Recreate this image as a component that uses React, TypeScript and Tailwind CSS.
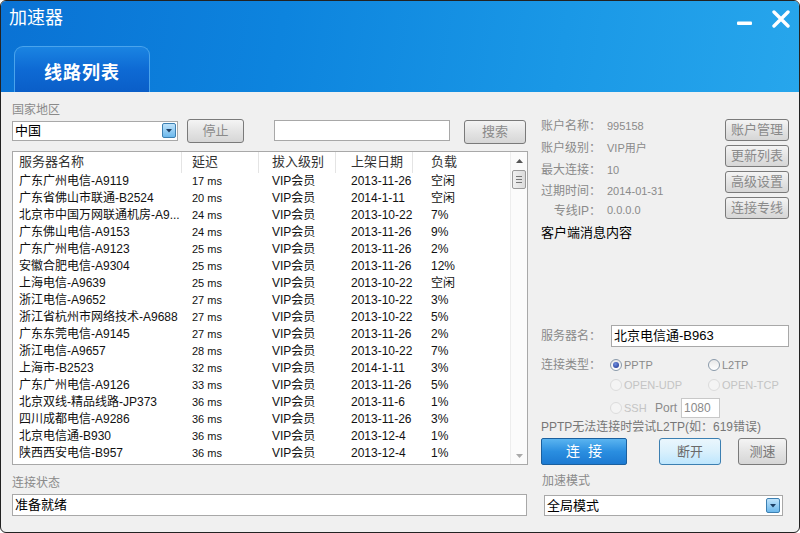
import React from "react";

const rows: [string, string, string, string, string][] = [
  ["广东广州电信-A9119", "17 ms", "VIP会员", "2013-11-26", "空闲"],
  ["广东省佛山市联通-B2524", "20 ms", "VIP会员", "2014-1-11", "空闲"],
  ["北京市中国万网联通机房-A9...", "24 ms", "VIP会员", "2013-10-22", "7%"],
  ["广东佛山电信-A9153", "24 ms", "VIP会员", "2013-11-26", "9%"],
  ["广东广州电信-A9123", "25 ms", "VIP会员", "2013-11-26", "2%"],
  ["安徽合肥电信-A9304", "25 ms", "VIP会员", "2013-11-26", "12%"],
  ["上海电信-A9639", "25 ms", "VIP会员", "2013-10-22", "空闲"],
  ["浙江电信-A9652", "27 ms", "VIP会员", "2013-10-22", "3%"],
  ["浙江省杭州市网络技术-A9688", "27 ms", "VIP会员", "2013-10-22", "5%"],
  ["广东东莞电信-A9145", "27 ms", "VIP会员", "2013-11-26", "2%"],
  ["浙江电信-A9657", "28 ms", "VIP会员", "2013-10-22", "7%"],
  ["上海市-B2523", "32 ms", "VIP会员", "2014-1-11", "3%"],
  ["广东广州电信-A9126", "33 ms", "VIP会员", "2013-11-26", "5%"],
  ["北京双线-精品线路-JP373", "36 ms", "VIP会员", "2013-11-6", "1%"],
  ["四川成都电信-A9286", "36 ms", "VIP会员", "2013-11-26", "3%"],
  ["北京电信通-B930", "36 ms", "VIP会员", "2013-12-4", "1%"],
  ["陕西西安电信-B957", "36 ms", "VIP会员", "2013-12-4", "1%"],
];

const info: [string, string, string][] = [
  ["账户名称：", "995158", "h-[22px]"],
  ["账户级别：", "VIP用户", "h-[22px]"],
  ["最大连接：", "10", "h-[22px]"],
  ["过期时间：", "2014-01-31", "h-[20px]"],
  ["专线IP：", "0.0.0.0", "h-[19px]"],
];

function DropBtn() {
  return (
    <div className="w-[14px] h-[15px] rounded-[2px] border border-[#3c7fb1] bg-[linear-gradient(#bfe3fb,#6cb8ec)] flex items-center justify-center">
      <svg width="6" height="4" viewBox="0 0 6 4">
        <path d="M0 0h6L3 3.5z" fill="#1c3f66" />
      </svg>
    </div>
  );
}

function GrayBtn({ children, cls }: { children: React.ReactNode; cls: string }) {
  return (
    <div
      className={
        "flex items-center justify-center rounded-[3px] border border-[#7a7a7a] bg-[linear-gradient(#f4f4f4,#e4e4e4_50%,#d6d6d6)] text-[13px] text-[#8a8a8a] " +
        cls
      }
    >
      {children}
    </div>
  );
}

function Radio({ checked, disabled, label }: { checked?: boolean; disabled?: boolean; label: string }) {
  return (
    <div className={"flex items-center gap-[2px] " + (disabled ? "text-[#c4c4c4]" : "text-[#8a8a8a]")}>
      <div
        className={
          "w-[12px] h-[12px] rounded-full border flex items-center justify-center " +
          (disabled ? "border-[#dcdcdc] bg-[#f4f4f4]" : "border-[#8a9aaa] bg-[linear-gradient(#e8e8e8,#ffffff)]")
        }
      >
        {checked && <div className="w-[6px] h-[6px] rounded-full bg-[radial-gradient(circle_at_40%_35%,#6f8fe0,#1a2f8a)]" />}
      </div>
      <span>{label}</span>
    </div>
  );
}

export default function App() {
  return (
    <div
      className="w-[800px] h-[533px] bg-white overflow-hidden"
      style={{ fontFamily: '"Liberation Sans", "Noto Sans CJK SC", sans-serif' }}
    >
      <div className="w-[800px] h-[533px] rounded-[6px] border border-[#222] overflow-hidden flex flex-col bg-[#f0f0f0]">
        {/* title area */}
        <div className="relative h-[91px] shrink-0 bg-[linear-gradient(100deg,#0a72d4_0%,#0d84de_35%,#1a98e6_70%,#27a6ec_100%)]">
          <div className="absolute left-[8px] top-[5px] text-[18px] leading-[24px] text-white">加速器</div>
          <svg className="absolute left-[736px] top-[20px]" width="15" height="5" viewBox="0 0 15 5">
            <rect x="0" y="0.5" width="15" height="3.5" rx="1" fill="#fff" />
          </svg>
          <svg className="absolute left-[771px] top-[9px]" width="18" height="18" viewBox="0 0 18 18">
            <path d="M2 2L16 16M16 2L2 16" stroke="#fff" strokeWidth="3.4" strokeLinecap="round" />
          </svg>
          <div className="absolute left-[13px] top-[45px] w-[136px] h-[46px] rounded-t-[9px] border border-b-0 border-[#4aa4ec] bg-[linear-gradient(#1a84e2,#0e6ad4_50%,#0a5ec8)] flex items-center justify-center">
            <span className="text-[18px] font-bold text-white pt-[8px] tracking-[1px]">线路列表</span>
          </div>
        </div>

        {/* body */}
        <div className="flex flex-1">
          {/* left column */}
          <div className="ml-[11px] w-[516px] flex flex-col">
            <div className="pt-[10px] h-[26px] text-[12px] leading-[16px] text-[#8a8a8a]">国家地区</div>
            <div className="h-[25px] flex items-center">
              <div className="w-[166px] h-[20px] border border-[#a8a8a8] bg-white flex items-center justify-between pl-[2px] pr-[1px]">
                <span className="text-[13px] text-black">中国</span>
                <DropBtn />
              </div>
              <GrayBtn cls="ml-[9px] w-[57px] h-[24px]">停止</GrayBtn>
              <div className="ml-[30px] w-[176px] h-[21px] border border-[#a8a8a8] bg-white" />
              <GrayBtn cls="ml-[14px] w-[62px] h-[24px] mt-[2px]">搜索</GrayBtn>
            </div>
            {/* list */}
            <div className="mt-[8px] h-[314px] border border-[#a8a8a8] bg-white flex">
              <div className="flex-1 flex flex-col">
                <div className="h-[21px] flex text-[13px] text-[#333] leading-[19px]">
                  <div className="w-[169px] pl-[6px] border-r border-[#e4e4e4]">服务器名称</div>
                  <div className="w-[77px] pl-[10px] border-r border-[#e4e4e4]">延迟</div>
                  <div className="w-[77px] pl-[13px] border-r border-[#e4e4e4]">拔入级别</div>
                  <div className="w-[77px] pl-[15px] border-r border-[#e4e4e4]">上架日期</div>
                  <div className="flex-1 pl-[18px]">负载</div>
                </div>
                {rows.map((r, i) => (
                  <div key={i} className="h-[17px] flex items-center text-[12px] text-[#111] leading-[17px] whitespace-nowrap">
                    <div className="w-[179px] pl-[6px] overflow-hidden">{r[0]}</div>
                    <div className="w-[80px] text-[11px]">{r[1]}</div>
                    <div className="w-[79px] text-[12px]">{r[2]}</div>
                    <div className="w-[80px]">{r[3]}</div>
                    <div className="flex-1">{r[4]}</div>
                  </div>
                ))}
              </div>
              <div className="w-[17px] border-l border-[#ededed] bg-[#fbfbfb] flex flex-col items-center">
                <div className="h-[18px] flex items-center justify-center">
                  <svg width="7" height="4" viewBox="0 0 7 4"><path d="M0 4L3.5 0L7 4z" fill="#555" /></svg>
                </div>
                <div className="w-[14px] h-[19px] rounded-[2px] border border-[#9a9a9a] bg-[linear-gradient(90deg,#f0f0f0,#dcdcdc)] flex flex-col items-center justify-center gap-[2px]">
                  <div className="w-[6px] h-px bg-[#777]" />
                  <div className="w-[6px] h-px bg-[#777]" />
                  <div className="w-[6px] h-px bg-[#777]" />
                </div>
                <div className="flex-1" />
                <div className="h-[17px] flex items-center justify-center">
                  <svg width="7" height="4" viewBox="0 0 7 4"><path d="M0 0L3.5 4L7 0z" fill="#aaa" /></svg>
                </div>
              </div>
            </div>
            <div className="mt-[10px] h-[16px] text-[12px] leading-[16px] text-[#8a8a8a]">连接状态</div>
            <div className="mt-[3px] w-[515px] h-[22px] border border-[#a8a8a8] bg-white flex items-center pl-[2px] text-[13px] text-black">
              准备就绪
            </div>
          </div>

          {/* right column */}
          <div className="ml-[13px] w-[248px] flex flex-col text-[12px]">
            <div className="mt-[23px] h-[106px] flex">
              <div className="flex-1 flex flex-col text-[#8a8a8a]">
                {info.map(([a, b, h]) => (
                  <div key={a} className={h + " flex items-center"}>
                    <div className="w-[60px] text-right text-[12px]">{a}</div>
                    <div className="ml-[6px] text-[11px]">{b}</div>
                  </div>
                ))}
              </div>
              <div className="w-[64px] flex flex-col gap-[4px] pt-[4px]">
                {["账户管理", "更新列表", "高级设置", "连接专线"].map((t) => (
                  <GrayBtn key={t} cls="w-[64px] h-[22px] text-[#6a6a6a]">{t}</GrayBtn>
                ))}
              </div>
            </div>
            <div className="mt-[4px] h-[16px] leading-[16px] text-[13px] text-black">客户端消息内容</div>
            <div className="mt-[84px] h-[22px] flex items-center">
              <div className="w-[70px] text-[#8a8a8a] text-[12px]">服务器名：</div>
              <div className="w-[178px] h-[22px] border border-[#a8a8a8] bg-white flex items-center pl-[2px] text-[13px] text-black">
                北京电信通-B963
              </div>
            </div>
            <div className="mt-[8px] h-[20px] flex items-center text-[11px]">
              <div className="w-[69px] text-[12px] text-[#8a8a8a]">连接类型：</div>
              <div className="w-[98px]"><Radio checked label="PPTP" /></div>
              <Radio label="L2TP" />
            </div>
            <div className="h-[20px] flex items-center text-[11px]">
              <div className="w-[69px]" />
              <div className="w-[98px]"><Radio disabled label="OPEN-UDP" /></div>
              <Radio disabled label="OPEN-TCP" />
            </div>
            <div className="mt-[3px] h-[20px] flex items-center text-[11px]">
              <div className="w-[69px]" />
              <div className="w-[45px]"><Radio disabled label="SSH" /></div>
              <span className="text-[#8a8a8a] text-[12px]">Port</span>
              <div className="ml-[4px] w-[39px] h-[20px] border border-[#c8c8c8] bg-white flex items-center pl-[2px] text-[#8a8a8a] text-[12px]">1080</div>
            </div>
            <div className="mt-[1px] h-[16px] leading-[16px] text-[#777] text-[12px] whitespace-nowrap">PPTP无法连接时尝试L2TP(如：619错误)</div>
            <div className="mt-[3px] h-[27px] flex items-center">
              <div className="w-[86px] h-[27px] rounded-[2px] border border-[#1a5f9e] bg-[linear-gradient(#5ab4f0,#2a8ee0_50%,#1c7ad2)] text-white text-[14px] flex items-center justify-center tracking-[8px] pl-[8px]">
                连接
              </div>
              <div className="ml-[32px] w-[62px] h-[27px] rounded-[3px] border border-[#3c7fb1] bg-[linear-gradient(#eaf6fd,#d9f0fc_50%,#bee6fd)] text-[#6a6a6a] text-[13px] flex items-center justify-center">
                断开
              </div>
              <GrayBtn cls="ml-[17px] w-[49px] h-[27px] text-[#777]">测速</GrayBtn>
            </div>
            <div className="mt-[8px] h-[16px] leading-[16px] text-[#8a8a8a] text-[12px] pl-[1px]">加速模式</div>
            <div className="mt-[6px] ml-[3px] w-[239px] h-[21px] border border-[#a8a8a8] bg-white flex items-center justify-between pl-[2px] pr-[2px] text-[13px] text-black">
              <span>全局模式</span>
              <DropBtn />
            </div>
          </div>
        </div>
      </div>
    </div>
  );
}
